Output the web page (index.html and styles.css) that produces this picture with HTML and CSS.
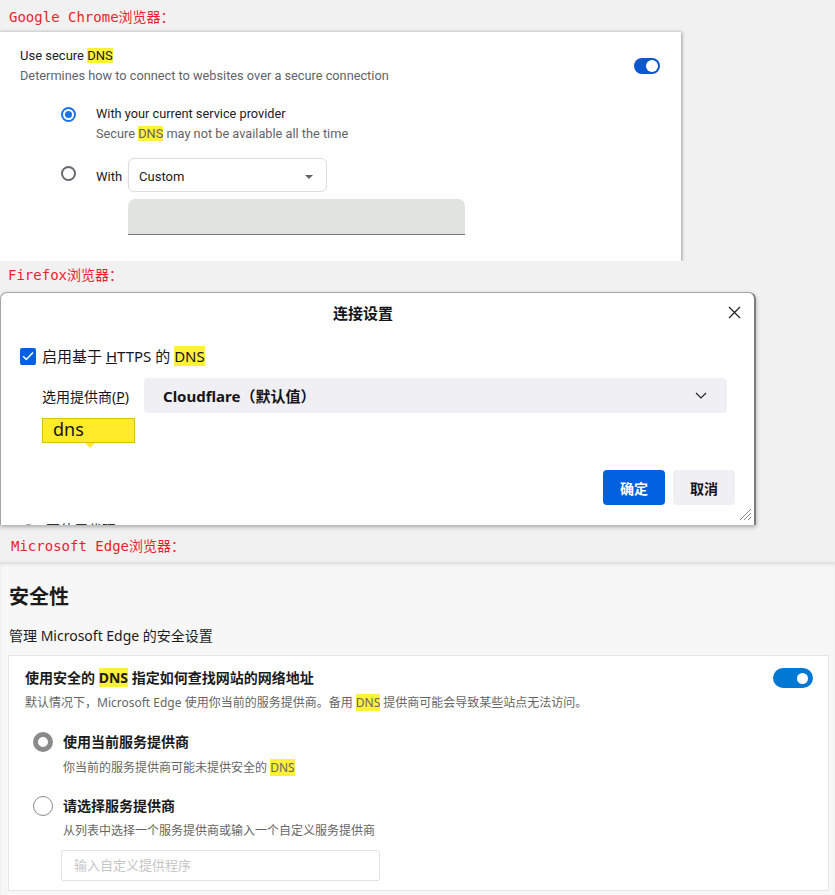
FILE: index.html
```html
<!DOCTYPE html>
<html lang="zh-CN">
<head>
<meta charset="utf-8">
<title>DNS settings</title>
<link rel="stylesheet" href="styles.css">
</head>
<body>
<div class="label label-1">Google Chrome浏览器：</div>
<section class="chrome">
  <div class="c-head">
    <div>
      <div class="c-title">Use secure <mark>DNS</mark></div>
      <div class="c-desc">Determines how to connect to websites over a secure connection</div>
    </div>
    <span class="c-toggle"><span class="c-knob"></span></span>
  </div>
  <div class="c-opt">
    <span class="c-radio c-radio-on"><span class="c-dot"></span></span>
    <div>
      <div class="c-title c-opt-title">With your current service provider</div>
      <div class="c-desc">Secure <mark>DNS</mark> may not be available all the time</div>
    </div>
  </div>
  <div class="c-opt c-opt-2">
    <span class="c-radio c-radio-off"></span>
    <span class="c-with">With</span>
    <div class="c-select"><span>Custom</span><span class="c-caret"></span></div>
  </div>
  <div class="c-input"></div>
</section>

<div class="label label-2">Firefox浏览器：</div>
<section class="ff">
  <div class="ff-head">
    <div class="ff-title">连接设置</div>
    <span class="ff-close"><svg width="13" height="13" viewBox="0 0 13 13"><path d="M1 1L12 12M12 1L1 12" stroke="#222" stroke-width="1.2" fill="none"/></svg></span>
  </div>
  <div class="ff-check-row">
    <span class="ff-check"><svg width="12" height="10" viewBox="0 0 12 10"><path d="M1 5.2L4.3 8.4L11 1.5" stroke="#fff" stroke-width="1.5" fill="none"/></svg></span>
    <span>启用基于 <u>H</u>TTPS 的 <mark>DNS</mark></span>
  </div>
  <div class="ff-prov-row">
    <span class="ff-prov-label">选用提供商(<u>P</u>)</span>
    <div class="ff-select"><span>Cloudflare（默认值）</span><svg width="12" height="7" viewBox="0 0 12 7"><path d="M1 1L6 6L11 1" stroke="#222" stroke-width="1.2" fill="none"/></svg></div>
  </div>
  <div class="ff-tip">dns</div>
  <div class="ff-buttons">
    <button class="ff-btn ff-ok">确定</button>
    <button class="ff-btn ff-cancel">取消</button>
  </div>
  <div class="ff-peek"><span class="ff-peek-radio"></span>不使用代理(<u>N</u>)</div>
  <svg class="ff-grip" width="14" height="14" viewBox="0 0 14 14"><path d="M13 2L2 13M13 6L6 13M13 10L10 13" stroke="#888" stroke-width="1" fill="none"/></svg>
</section>

<div class="label label-3">Microsoft Edge浏览器：</div>
<section class="edge">
  <h1 class="e-h1">安全性</h1>
  <div class="e-sub">管理 Microsoft Edge 的安全设置</div>
  <div class="e-card">
    <div class="e-head">
      <div class="e-title">使用安全的 <mark>DNS</mark> 指定如何查找网站的网络地址</div>
      <span class="e-toggle"><span class="e-knob"></span></span>
    </div>
    <div class="e-desc">默认情况下，Microsoft Edge 使用你当前的服务提供商。备用 <mark>DNS</mark> 提供商可能会导致某些站点无法访问。</div>
    <div class="e-opt e-opt-1">
      <span class="e-radio e-radio-on"></span>
      <span class="e-title">使用当前服务提供商</span>
    </div>
    <div class="e-desc e-opt-desc e-gap-1">你当前的服务提供商可能未提供安全的 <mark>DNS</mark></div>
    <div class="e-opt e-opt-2">
      <span class="e-radio"></span>
      <span class="e-title">请选择服务提供商</span>
    </div>
    <div class="e-desc e-opt-desc e-gap-2">从列表中选择一个服务提供商或输入一个自定义服务提供商</div>
    <div class="e-input">输入自定义提供程序</div>
  </div>
</section>
</body>
</html>
```

FILE: styles.css
```css
* { box-sizing: border-box; }

body {
  margin: 0;
  width: 835px;
  height: 895px;
  overflow: hidden;
  background: #f1f1f1;
  font-family: "Noto Sans", "Noto Sans CJK SC", sans-serif;
}

mark {
  background: #fff03a;
  color: inherit;
}

/* red section labels */
.label {
  font-family: "DejaVu Sans Mono", "Liberation Mono", "Noto Sans CJK SC", monospace;
  font-size: 14px;
  line-height: 18px;
  color: #ee1d2b;
  background: #f1f1f1;
}
.label-1 { height: 31px; padding: 8px 0 0 9px; }
.label-2 { height: 31px; padding: 5px 0 0 8px; }
.label-3 { height: 37px; padding: 12px 0 0 11px; }

/* ---------- Chrome ---------- */
.chrome {
  width: 681px;
  height: 230px;
  background: #fff;
  border-top: 1px solid #d4d4d4;
  box-shadow: 1px 1px 3px rgba(0, 0, 0, 0.35);
  padding: 14px 21px 0 20px;
  font-family: Roboto, "Liberation Sans", sans-serif;
  font-size: 13px;
  color: #202124;
}
.c-head {
  display: flex;
  justify-content: space-between;
  align-items: flex-start;
}
.c-title { line-height: 20px; color: #202124; }
.c-opt-title { font-size: 12.75px; }
.c-desc { font-size: 12.75px; line-height: 20px; color: #5f6368; }
.c-toggle {
  display: flex;
  justify-content: flex-end;
  align-items: center;
  width: 26px;
  height: 16px;
  margin-top: 12px;
  padding-right: 2px;
  border-radius: 8px;
  background: #0b57d0;
}
.c-knob {
  width: 12px;
  height: 12px;
  border-radius: 50%;
  background: #fff;
}
.c-opt {
  display: flex;
  align-items: flex-start;
  margin: 18px 0 0 41px;
  gap: 20px;
}
.c-radio {
  flex: none;
  display: flex;
  justify-content: center;
  align-items: center;
  width: 15px;
  height: 15px;
  border-radius: 50%;
  margin-top: 3px;
}
.c-radio-on { border: 2px solid #1a73e8; }
.c-dot { width: 7px; height: 7px; border-radius: 50%; background: #1a73e8; }
.c-radio-off { border: 2px solid #666a6e; }
.c-opt-2 {
  margin-top: 14px;
  align-items: center;
  gap: 0;
}
.c-opt-2 .c-radio { align-self: flex-start; margin-top: 8px; margin-right: 20px; }
.c-with { margin-right: 6px; padding-top: 3px; }
.c-select {
  display: flex;
  justify-content: space-between;
  align-items: center;
  width: 199px;
  height: 34px;
  padding: 3px 13px 0 10px;
  border: 1px solid #dadce0;
  border-radius: 6px;
}
.c-caret {
  width: 0;
  height: 0;
  border-left: 4px solid transparent;
  border-right: 4px solid transparent;
  border-top: 4px solid #5f6368;
}
.c-input {
  width: 337px;
  height: 36px;
  margin: 7px 0 0 108px;
  background: #e1e3e1;
  border-bottom: 1px solid #747775;
  border-radius: 7px 7px 0 0;
}

/* ---------- Firefox ---------- */
.ff {
  position: relative;
  width: 756px;
  height: 233px;
  overflow: hidden;
  background: #fff;
  border: 1px solid #a4a4a4;
  border-right: 2px solid #7e7e7e;
  border-bottom: none;
  border-radius: 7px 7px 0 0;
  box-shadow: 0 2px 4px rgba(0, 0, 0, 0.3);
  font-family: "Noto Sans", "Noto Sans CJK SC", sans-serif;
  color: #15141a;
}
.ff-head {
  display: flex;
  align-items: center;
  height: 39px;
}
.ff-title {
  flex: 1;
  text-align: center;
  padding-left: 3px;
  font-size: 15px;
  font-weight: bold;
  line-height: 20px;
}
.ff-close {
  display: flex;
  justify-content: center;
  align-items: center;
  width: 24px;
  height: 24px;
  margin-right: 8px;
}
.ff-check-row {
  display: flex;
  align-items: center;
  gap: 6px;
  margin: 13px 0 0 19px;
  font-size: 15px;
  line-height: 22px;
}
.ff-check {
  display: flex;
  justify-content: center;
  align-items: center;
  width: 16px;
  height: 17px;
  border-radius: 2px;
  background: #0061e0;
}
.ff-prov-row {
  display: flex;
  align-items: center;
  margin: 11px 0 0 41px;
}
.ff-prov-label {
  width: 102px;
  font-size: 14px;
}
.ff-select {
  display: flex;
  justify-content: space-between;
  align-items: center;
  width: 583px;
  height: 35px;
  padding: 0 20px 0 19px;
  border-radius: 4px;
  background: #f0f0f4;
  font-size: 15px;
  font-weight: bold;
}
.ff-tip {
  position: relative;
  width: 93px;
  height: 25px;
  margin: 5px 0 0 41px;
  padding-left: 10px;
  background: #ffeb2a;
  border: 1px solid #d9c000;
  font-size: 18px;
  line-height: 21px;
}
.ff-tip::after {
  content: "";
  position: absolute;
  left: 42px;
  bottom: -6px;
  border-left: 5px solid transparent;
  border-right: 5px solid transparent;
  border-top: 5px solid #ffeb2a;
}
.ff-buttons {
  display: flex;
  justify-content: flex-end;
  gap: 8px;
  margin: 27px 19px 0 0;
}
.ff-btn {
  width: 62px;
  height: 35px;
  border: none;
  border-radius: 4px;
  font-family: "Noto Sans CJK SC", sans-serif;
  font-size: 14px;
  font-weight: bold;
}
.ff-ok { background: #0061e0; color: #fff; }
.ff-cancel { background: #f0f0f4; color: #15141a; }
.ff-peek {
  display: flex;
  align-items: center;
  gap: 11px;
  margin: 15px 0 0 21px;
  font-size: 14px;
  line-height: 20px;
  color: #333;
}
.ff-peek-radio {
  width: 13px;
  height: 13px;
  border: 1px solid #888;
  border-radius: 50%;
}
.ff-grip {
  position: absolute;
  right: 2px;
  bottom: 4px;
}

/* ---------- Edge ---------- */
.edge {
  height: 333px;
  padding: 20px 6px 0 8px;
  background: #f7f7f7;
  border-top: 1px solid #dcdcdc;
  box-shadow: inset 0 2px 3px rgba(0, 0, 0, 0.08);
  font-family: "Noto Sans", "Noto Sans CJK SC", sans-serif;
  color: #1b1b1b;
}
.e-h1 {
  margin: 0 0 0 1px;
  font-size: 20px;
  line-height: 28px;
  font-weight: bold;
}
.e-sub {
  margin: 15px 0 0 1px;
  font-size: 14px;
  line-height: 20px;
}
.e-card {
  width: 821px;
  height: 236px;
  margin-top: 9px;
  padding: 12px 15px 0 16px;
  background: #fff;
  border: 1px solid #e5e5e5;
}
.e-head {
  display: flex;
  justify-content: space-between;
  align-items: center;
}
.e-title {
  font-size: 14px;
  font-weight: bold;
  line-height: 20px;
}
.e-toggle {
  display: flex;
  justify-content: flex-end;
  align-items: center;
  width: 40px;
  height: 20px;
  padding-right: 5px;
  border-radius: 10px;
  background: #0078d4;
}
.e-knob {
  width: 11px;
  height: 11px;
  border-radius: 50%;
  background: #fff;
}
.e-desc {
  margin-top: 5px;
  font-size: 12px;
  line-height: 20px;
  color: #666;
}
.e-opt {
  display: flex;
  align-items: center;
  gap: 10px;
  margin-left: 8px;
}
.e-opt-1 { margin-top: 19px; }
.e-opt-2 { margin-top: 18px; }
.e-radio {
  width: 20px;
  height: 20px;
  border-radius: 50%;
  border: 1px solid #8a8a8a;
}
.e-radio-on { border: 5px solid #8a8a8a; }
.e-opt-desc { margin-left: 38px; }
.e-gap-1 { margin-top: 6px; }
.e-gap-2 { margin-top: 5px; }
.e-input {
  width: 319px;
  height: 31px;
  margin: 9px 0 0 36px;
  padding-left: 12px;
  border: 1px solid #e3e3e3;
  border-radius: 2px;
  font-size: 13px;
  line-height: 29px;
  color: #c6c6c6;
}
```
